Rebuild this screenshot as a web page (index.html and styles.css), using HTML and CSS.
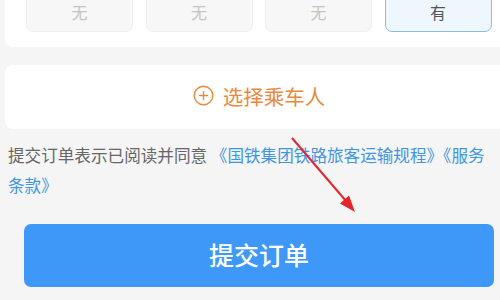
FILE: index.html
```html
<!DOCTYPE html>
<html lang="zh-CN">
<head>
    <meta charset="UTF-8">
    <meta name="viewport" content="width=device-width, initial-scale=1.0">
    <title>提交订单</title>
    <link rel="stylesheet" href="styles.css">
</head>
<body>

    <div class="seat-card">
        <div class="seat-options">
            <div class="seat-option">无</div>
            <div class="seat-option">无</div>
            <div class="seat-option">无</div>
            <div class="seat-option selected">有</div>
        </div>
    </div>

    <div class="passenger-card">
        <svg class="add-icon" width="21" height="21" viewBox="0 0 21 21">
            <circle cx="10.5" cy="10.5" r="9.3" fill="none" stroke="#e8893c" stroke-width="1.4"/>
            <path d="M10.5 6.6v7.8M6.6 10.5h7.8" stroke="#e8893c" stroke-width="1.4" stroke-linecap="round"/>
        </svg>
        <span>选择乘车人</span>
    </div>

    <p class="agree-text">提交订单表示已阅读并同意 <a href="#">《国铁集团铁路旅客运输规程》</a><a href="#">《服务条款》</a></p>

    <button class="submit-btn">提交订单</button>

    <!-- annotation arrow drawn over the screenshot -->
    <svg class="mark-arrow" width="500" height="300" viewBox="0 0 500 300">
        <line x1="292" y1="138" x2="346" y2="201" stroke="#e5252a" stroke-width="2"/>
        <polygon points="355,212 349,195.5 340,203.5" fill="#e5252a"/>
    </svg>

</body>
</html>
```

FILE: styles.css
```css
body {
    margin: 0;
    background-color: #f5f5f5;
    font-family: "Noto Sans CJK SC", "Noto Sans", sans-serif;
    width: 500px;
    height: 300px;
    overflow: hidden;
    position: relative;
}

.seat-card {
    background-color: #fff;
    margin: -22px -10px 0 5px;
    padding: 14px 0 15px 21px;
    border-radius: 8px;
}

.seat-options {
    display: grid;
    grid-template-columns: repeat(4, 107px);
    gap: 12.5px;
}

.seat-option {
    height: 38px;
    display: flex;
    align-items: center;
    justify-content: center;
    background-color: #f7f7f7;
    border: 1px solid #efefef;
    border-radius: 7px;
    color: #c4c4c4;
    font-size: 16px;
}

.seat-option.selected {
    background-color: #eef6fe;
    border-color: #8dbbe3;
    color: #555;
}

.passenger-card {
    background-color: #fff;
    margin: 18px -10px 0 5px;
    height: 64px;
    border-radius: 8px;
    display: flex;
    align-items: center;
    justify-content: center;
    gap: 9px;
    padding-left: 3px;
    color: #e8893c;
    font-size: 20.5px;
}

.passenger-card span {
    margin-top: -2px;
}

.add-icon {
    margin-top: -3px;
}

.agree-text {
    margin: 11px 0 0 0;
    padding: 0 4px 0 8px;
    font-size: 16.6px;
    line-height: 30px;
    color: #666;
}

.agree-text a {
    color: #3f96e0;
    text-decoration: none;
}

.submit-btn {
    display: block;
    margin: 24px 0 0 24px;
    width: 470px;
    height: 63px;
    background-color: #3d98f7;
    color: #fff;
    border: none;
    border-radius: 7px;
    font-family: "Noto Sans CJK SC", "Noto Sans", sans-serif;
    font-size: 25px;
    font-weight: 500;
    padding: 0 0 4px 0;
}

.mark-arrow {
    position: absolute;
    left: 0;
    top: 0;
    pointer-events: none;
}
```
